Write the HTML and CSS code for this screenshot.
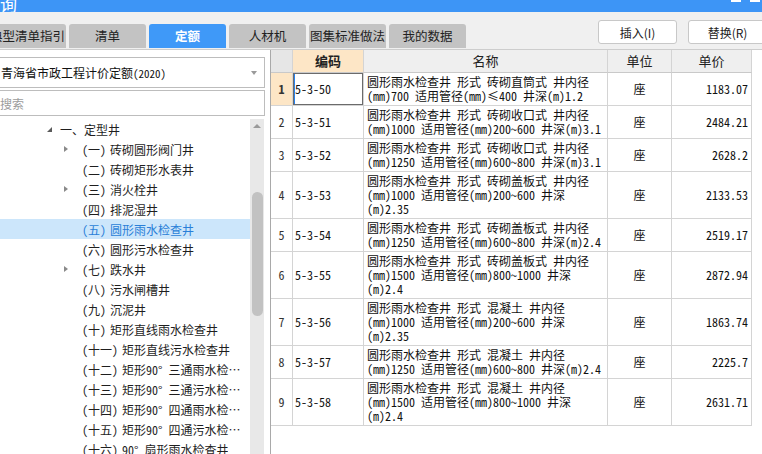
FILE: index.html
```html
<!DOCTYPE html>
<html lang="zh-CN">
<head>
<meta charset="utf-8">
<title>查询</title>
<link rel="stylesheet" href="styles.css">
</head>
<body>
<div class="titlebar">
  <span class="title">查询</span>
  <span class="winctl"><i></i><i></i></span>
</div>
<div class="toolbar">
  <div class="tabs">
    <div class="tab">典型清单指引</div>
    <div class="tab">清单</div>
    <div class="tab active">定额</div>
    <div class="tab">人材机</div>
    <div class="tab">图集标准做法</div>
    <div class="tab">我的数据</div>
  </div>
  <div class="actions">
    <button class="btn">插入(I)</button>
    <button class="btn">替换(R)</button>
  </div>
</div>
<div class="main">
  <div class="left">
    <div class="select"><span>青海省市政工程计价定额<small>(2020)</small></span><i class="caret"></i></div>
    <div class="search">搜索</div>
    <div class="treewrap">
      <div class="tree">
        <div class="row l0"><i class="tw open"></i><span class="lbl"><span class="num0">一、</span>定型井</span></div>
        <div class="row l1"><i class="tw closed"></i><span class="lbl"><span class="pre">（一）</span>砖砌圆形阀门井</span></div>
        <div class="row l1"><i class="tw"></i><span class="lbl"><span class="pre">（二）</span>砖砌矩形水表井</span></div>
        <div class="row l1"><i class="tw closed"></i><span class="lbl"><span class="pre">（三）</span>消火栓井</span></div>
        <div class="row l1"><i class="tw"></i><span class="lbl"><span class="pre">（四）</span>排泥湿井</span></div>
        <div class="row l1 sel"><i class="tw"></i><span class="lbl"><span class="pre">（五）</span>圆形雨水检查井</span></div>
        <div class="row l1"><i class="tw"></i><span class="lbl"><span class="pre">（六）</span>圆形污水检查井</span></div>
        <div class="row l1"><i class="tw closed"></i><span class="lbl"><span class="pre">（七）</span>跌水井</span></div>
        <div class="row l1"><i class="tw"></i><span class="lbl"><span class="pre">（八）</span>污水闸槽井</span></div>
        <div class="row l1"><i class="tw"></i><span class="lbl"><span class="pre">（九）</span>沉泥井</span></div>
        <div class="row l1"><i class="tw"></i><span class="lbl"><span class="pre">（十）</span>矩形直线雨水检查井</span></div>
        <div class="row l1"><i class="tw"></i><span class="lbl"><span class="pre">（十一）</span>矩形直线污水检查井</span></div>
        <div class="row l1"><i class="tw"></i><span class="lbl"><span class="pre">（十二）</span>矩形90° 三通雨水检查井</span></div>
        <div class="row l1"><i class="tw"></i><span class="lbl"><span class="pre">（十三）</span>矩形90° 三通污水检查井</span></div>
        <div class="row l1"><i class="tw"></i><span class="lbl"><span class="pre">（十四）</span>矩形90° 四通雨水检查井</span></div>
        <div class="row l1"><i class="tw"></i><span class="lbl"><span class="pre">（十五）</span>矩形90° 四通污水检查井</span></div>
        <div class="row l1"><i class="tw"></i><span class="lbl"><span class="pre">（十六）</span>90° 扇形雨水检查井</span></div>
      </div>
      <div class="vscroll"><i class="up"></i><div class="thumb"></div></div>
    </div>
  </div>
  <div class="right">
    <table class="grid">
      <colgroup><col class="c-no"><col class="c-code"><col class="c-name"><col class="c-unit"><col class="c-price"></colgroup>
      <thead>
        <tr><th class="no"></th><th class="hl">编码</th><th>名称</th><th>单位</th><th>单价</th></tr>
      </thead>
      <tbody>
        <tr class="cur"><td class="no">1</td><td class="code focus">5-3-50</td><td class="name">圆形雨水检查井 形式 砖砌直筒式 井内径<br>(mm)700 适用管径(mm)≤400 井深(m)1.2</td><td class="unit">座</td><td class="price">1183.07</td></tr>
        <tr><td class="no">2</td><td class="code">5-3-51</td><td class="name">圆形雨水检查井 形式 砖砌收口式 井内径<br>(mm)1000 适用管径(mm)200~600 井深(m)3.1</td><td class="unit">座</td><td class="price">2484.21</td></tr>
        <tr><td class="no">3</td><td class="code">5-3-52</td><td class="name">圆形雨水检查井 形式 砖砌收口式 井内径<br>(mm)1250 适用管径(mm)600~800 井深(m)3.1</td><td class="unit">座</td><td class="price">2628.2</td></tr>
        <tr><td class="no">4</td><td class="code">5-3-53</td><td class="name">圆形雨水检查井 形式 砖砌盖板式 井内径<br>(mm)1000 适用管径(mm)200~600 井深<br>(m)2.35</td><td class="unit">座</td><td class="price">2133.53</td></tr>
        <tr><td class="no">5</td><td class="code">5-3-54</td><td class="name">圆形雨水检查井 形式 砖砌盖板式 井内径<br>(mm)1250 适用管径(mm)600~800 井深(m)2.4</td><td class="unit">座</td><td class="price">2519.17</td></tr>
        <tr><td class="no">6</td><td class="code">5-3-55</td><td class="name">圆形雨水检查井 形式 砖砌盖板式 井内径<br>(mm)1500 适用管径(mm)800~1000 井深<br>(m)2.4</td><td class="unit">座</td><td class="price">2872.94</td></tr>
        <tr><td class="no">7</td><td class="code">5-3-56</td><td class="name">圆形雨水检查井 形式 混凝土 井内径<br>(mm)1000 适用管径(mm)200~600 井深<br>(m)2.35</td><td class="unit">座</td><td class="price">1863.74</td></tr>
        <tr><td class="no">8</td><td class="code">5-3-57</td><td class="name">圆形雨水检查井 形式 混凝土 井内径<br>(mm)1250 适用管径(mm)600~800 井深(m)2.4</td><td class="unit">座</td><td class="price">2225.7</td></tr>
        <tr><td class="no">9</td><td class="code">5-3-58</td><td class="name">圆形雨水检查井 形式 混凝土 井内径<br>(mm)1500 适用管径(mm)800~1000 井深<br>(m)2.4</td><td class="unit">座</td><td class="price">2631.71</td></tr>
      </tbody>
    </table>
  </div>
</div>
</body>
</html>
```
FILE: styles.css
```css
* { box-sizing: border-box; }
html, body { margin: 0; padding: 0; }
body {
  width: 762px;
  height: 454px;
  overflow: hidden;
  background: #f0f0f0;
  font-family: "Noto Sans CJK SC", "Noto Sans", sans-serif;
  font-size: 12px;
  color: #1e1e1e;
}

/* title bar */
.titlebar {
  height: 12px;
  background: #3d95f6;
  display: flex;
  align-items: flex-end;
  overflow: hidden;
}
.title {
  color: #fff;
  font-size: 17px;
  line-height: 20px;
  margin-left: -17px;
  margin-bottom: -2px;
}
.winctl {
  margin-left: auto;
  align-self: flex-start;
  display: flex;
  gap: 9px;
  margin-right: 2px;
}
.winctl i {
  display: block;
  width: 10px;
  height: 2px;
  background: #fff;
}

/* toolbar */
.toolbar {
  height: 37px;
  display: flex;
  align-items: flex-start;
}
.tabs {
  display: flex;
  gap: 3px;
  margin-left: -11px;
  padding-top: 12px;
}
.tab {
  width: 77px;
  height: 24px;
  line-height: 24px;
  text-align: center;
  background: #c3c3c3;
  border-radius: 3px 3px 0 0;
  color: #222;
  font-size: 12.5px;
  white-space: nowrap;
  overflow: hidden;
}
.tab.active {
  background: #3f99f8;
  color: #fff;
  font-weight: bold;
}
.actions {
  margin-left: auto;
  margin-right: -5px;
  padding-top: 8px;
  display: flex;
  gap: 11px;
}
.btn {
  width: 79px;
  height: 24px;
  border: 1px solid #c8c8c8;
  border-radius: 3px;
  background: #fff;
  font-family: inherit;
  font-size: 12px;
  color: #222;
  padding: 0;
}

/* main */
.main {
  height: 405px;
  display: flex;
  border-top: 1px solid #cdcdcd;
  background: #fff;
}
.left {
  width: 270px;
  flex: none;
  display: flex;
  flex-direction: column;
  background: #fff;
}
.select {
  margin: 7px 0 0 -3px;
  width: 268px;
  height: 31px;
  border: 1px solid #bdbdbd;
  display: flex;
  align-items: center;
  padding-left: 3px;
  padding-right: 7px;
  font-size: 12px;
  color: #111;
}
.select small { font-size: 11px; font-feature-settings: "hwid"; }
.caret {
  margin-left: auto;
  width: 0;
  height: 0;
  border-left: 3.5px solid transparent;
  border-right: 3.5px solid transparent;
  border-top: 4px solid #9a9a9a;
}
.search {
  margin: 2px 0 0 -3px;
  width: 268px;
  height: 26px;
  border: 1px solid #bdbdbd;
  display: flex;
  align-items: center;
  padding-left: 2px;
  color: #9c9c9c;
  font-size: 12px;
}
.treewrap {
  margin-top: 3px;
  flex: 1;
  display: flex;
  overflow: hidden;
}
.tree {
  width: 250px;
  flex: none;
  font-feature-settings: "halt", "hwid";
}
.row {
  height: 20px;
  display: flex;
  align-items: center;
  padding-right: 7px;
  white-space: nowrap;
  color: #1e1e1e;
}
.row.l0 { padding-left: 44px; }
.row.l1 { padding-left: 61px; }
.row.sel { background: #cce6fb; color: #2a7fd8; }
.tw {
  width: 10px;
  height: 10px;
  flex: none;
  display: flex;
  align-items: center;
  justify-content: center;
}
.tw.closed::before {
  content: "";
  width: 0;
  height: 0;
  border-left: 4px solid #8a8a8a;
  border-top: 3.5px solid transparent;
  border-bottom: 3.5px solid transparent;
}
.tw.open::before {
  content: "";
  width: 0;
  height: 0;
  border-left: 5px solid transparent;
  border-bottom: 5px solid #5a5a5a;
}
.lbl {
  overflow: hidden;
  text-overflow: ellipsis;
  min-width: 0;
}
.l0 .lbl { margin-left: 6px; }
.l1 .lbl { margin-left: 11px; }
.num0 { margin-right: 6px; }
.pre { margin-right: 4px; }

.vscroll {
  width: 14px;
  flex: none;
  background: #e8e8e8;
  display: flex;
  flex-direction: column;
  align-items: center;
}
.vscroll .up {
  margin-top: 5px;
  width: 0;
  height: 0;
  border-left: 4px solid transparent;
  border-right: 4px solid transparent;
  border-bottom: 4px solid #9a9a9a;
}
.thumb {
  margin-top: 64px;
  width: 11px;
  height: 124px;
  border-radius: 6px;
  background: #c2c2c2;
}

/* grid */
.right {
  flex: 1;
  border-left: 1px solid #a9a9a9;
  background: #fff;
  overflow: hidden;
}
.grid {
  border-collapse: separate;
  border-spacing: 0;
  table-layout: fixed;
  width: 481px;
  font-size: 12px;
  color: #111;
}
.c-no { width: 22px; }
.c-code { width: 71px; }
.c-name { width: 244px; }
.c-unit { width: 64px; }
.c-price { width: 80px; }
.grid th, .grid td {
  border-right: 1px solid #d4d4d4;
  border-bottom: 1px solid #d4d4d4;
  padding: 2px 3px;
  line-height: 14px;
  vertical-align: middle;
  white-space: nowrap;
  overflow: hidden;
}
.grid td { font-feature-settings: "hwid"; }
.grid th {
  height: 23px;
  line-height: 18px;
  background: #efefef;
  font-weight: normal;
  font-size: 13px;
  text-align: center;
  color: #222;
  border-bottom-color: #c9c9c9;
}
.grid th.no { background: #e6e6e6; }
.grid th.hl { background: #fde6c6; font-weight: bold; }
.grid td.no { text-align: center; padding: 0; color: #333; }
.grid tr.cur td.no { background: #fde6c6; font-weight: bold; }
.grid td.code { padding-left: 2px; }
.grid td.focus { box-shadow: inset 0 0 0 1px #6b6b6b, inset 2px 0 0 #2a83ef; }
.grid td.unit { text-align: center; }
.grid td.price { text-align: right; }
```
